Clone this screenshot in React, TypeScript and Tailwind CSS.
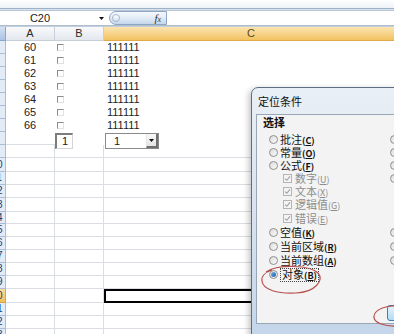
import React from "react";

type GridRow = { n: number; h: string; a?: string; hl?: boolean; sel?: boolean };

const topRows = [
  { n: 1, a: "60" },
  { n: 2, a: "61" },
  { n: 3, a: "62" },
  { n: 4, a: "63" },
  { n: 5, a: "64" },
  { n: 6, a: "65" },
  { n: 7, a: "66" },
];

const gridRows: GridRow[] = [
  { n: 9, h: "h-[13px]" },
  { n: 10, h: "h-[14px]" },
  { n: 11, h: "h-[13px]" },
  { n: 12, h: "h-[13px]" },
  { n: 13, h: "h-[14px]" },
  { n: 14, h: "h-[12px]" },
  { n: 15, h: "h-[13px]" },
  { n: 16, h: "h-[13px]" },
  { n: 17, h: "h-[13px]" },
  { n: 18, h: "h-[13px]" },
  { n: 19, h: "h-[13px]" },
  { n: 20, h: "h-[14px]", hl: true, sel: true },
  { n: 21, h: "h-[13px]" },
  { n: 22, h: "h-[13px]" },
  { n: 23, h: "h-[13px]" },
];

function RowHead({ n, hl }: { n: number; hl?: boolean }) {
  return (
    <div
      className={
        hl
          ? "w-[6px] shrink-0 overflow-hidden flex justify-end items-center border-b border-r border-[#d9a445] bg-linear-to-b from-[#fbdc9e] to-[#f2bf58]"
          : "w-[6px] shrink-0 overflow-hidden flex justify-end items-center border-b border-r border-[#a9bed6] bg-[#e3ebf6]"
      }
    >
      <span className="w-[16px] shrink-0 text-center text-[10px] leading-none text-[#22406a]">{n}</span>
    </div>
  );
}

function CheckSmall() {
  return (
    <div className="w-[7px] h-[7px] border-t border-l border-[#8c8c8c] border-r border-b border-r-[#e2e2e2] border-b-[#e2e2e2] bg-white" />
  );
}

type Item = {
  type: "radio" | "check";
  label: string;
  k: string;
  right?: boolean;
  selected?: boolean;
  h: string;
};

const items: Item[] = [
  { type: "radio", label: "批注", k: "C", right: true, h: "h-[13px]" },
  { type: "radio", label: "常量", k: "O", right: true, h: "h-[13px]" },
  { type: "radio", label: "公式", k: "F", right: true, h: "h-[13px]" },
  { type: "check", label: "数字", k: "U", right: true, h: "h-[13px]" },
  { type: "check", label: "文本", k: "X", h: "h-[13px]" },
  { type: "check", label: "逻辑值", k: "G", h: "h-[13px]" },
  { type: "check", label: "错误", k: "E", h: "h-[14px]" },
  { type: "radio", label: "空值", k: "K", right: true, h: "h-[14px]" },
  { type: "radio", label: "当前区域", k: "R", right: true, h: "h-[14px]" },
  { type: "radio", label: "当前数组", k: "A", right: true, h: "h-[14px]" },
  { type: "radio", label: "对象", k: "B", selected: true, h: "h-[15px]" },
];

function Radio({ on }: { on?: boolean }) {
  return (
    <div className="w-[9px] h-[9px] shrink-0 rounded-full border border-[#8e8f8f] bg-linear-to-br from-[#dcdcdc] to-[#fbfbfb] flex items-center justify-center">
      {on && <div className="w-[5px] h-[5px] rounded-full bg-linear-to-br from-[#6fb1ec] to-[#1a5ba8]" />}
    </div>
  );
}

function CheckDisabled() {
  return (
    <div className="w-[9px] h-[9px] shrink-0 border border-[#b5b5b5] bg-[#f4f4f4] flex items-center justify-center">
      <svg width="7" height="7" viewBox="0 0 7 7">
        <path d="M1 3.6 L2.8 5.3 L6 1.4" fill="none" stroke="#a0a0a0" strokeWidth="1.1" />
      </svg>
    </div>
  );
}

export default function App() {
  return (
    <div className="relative w-[394px] h-[334px] overflow-hidden bg-white font-['Liberation_Sans','Noto_Sans_CJK_SC',sans-serif] text-[11px] text-[#222]">
      {/* top band */}
      <div className="h-[8px] bg-linear-to-b from-white to-[#eef2f7]" />
      <div className="h-[3px] border-t border-[#9fb1c6] bg-[#d9e3ee] border-b border-b-[#b8c6d6]" />
      {/* formula bar */}
      <div className="flex h-[14px] items-stretch bg-white">
        <div className="w-[96px] flex items-center justify-center text-[11px] text-[#222] pr-[16px]">C20</div>
        <div className="w-[10px] flex items-center justify-center">
          <svg width="5" height="3" viewBox="0 0 5 3">
            <path d="M0 0 H5 L2.5 3 Z" fill="#111" />
          </svg>
        </div>
        <div className="w-[3px]" />
        <div className="w-[58px] rounded-l-full border border-[#8ea6c3] bg-linear-to-b from-[#f5f8fc] via-[#e3ecf7] to-[#c5d6eb] flex items-center justify-between pl-[2px] pr-[5px]">
          <div className="w-[8px] h-[8px] rounded-full border border-[#a5b7ce] bg-linear-to-b from-white to-[#d6e1ee]" />
          <span className="font-['Liberation_Serif',serif] italic text-[11px] leading-none text-[#333]">
            f<span className="text-[8px]">x</span>
          </span>
        </div>
        <div className="flex-1 bg-white" />
      </div>
      <div className="h-[2px] bg-[#c3cfdc] border-t border-[#aebccc]" />
      {/* column headers */}
      <div className="flex h-[14px]">
        <div className="w-[6px] border-r border-b border-[#8aa6cb] bg-linear-to-b from-[#d2e0f2] to-[#abc4e6]" />
        <div className="w-[49px] flex items-center justify-center border-r border-b border-[#c7d0da] bg-linear-to-b from-[#f8f9fb] to-[#e3e8ee] text-[#2c2c2c]">A</div>
        <div className="w-[49px] flex items-center justify-center border-r border-b border-[#c7d0da] bg-linear-to-b from-[#f8f9fb] to-[#e3e8ee] text-[#2c2c2c]">B</div>
        <div className="flex-1 flex items-center justify-center pl-[4px] border-b border-[#e0a94a] bg-linear-to-b from-[#fbe4b0] to-[#f2c25f] text-[#5b4a1e]">C</div>
      </div>
      {/* rows 1-7 */}
      {topRows.map((r) => (
        <div key={r.n} className="flex h-[13px]">
          <RowHead n={r.n} />
          <div className="w-[49px] flex items-center justify-center pr-[1px] text-[11px] leading-none text-[#222]">{r.a}</div>
          <div className="w-[49px] flex items-start pl-[2px] pt-[3px]">
            <CheckSmall />
          </div>
          <div className="flex-1 flex items-center pl-[3px] text-[11px] leading-none text-[#222]">111111</div>
        </div>
      ))}
      {/* row 8 with controls */}
      <div className="flex h-[13px] relative z-10">
        <RowHead n={8} />
        <div className="w-[49px] border-b border-[#dadde2]" />
        <div className="w-[49px] flex items-start">
          <div className="w-[18px] h-[16px] mt-[1px] border-t-2 border-l-2 border-[#7c7c7c] border-r border-b border-r-[#d4d4d4] border-b-[#d4d4d4] bg-white flex items-center justify-end pr-[4px] text-[11px] leading-none text-[#222]">
            1
          </div>
        </div>
        <div className="flex-1 flex items-start">
          <div className="w-[54px] h-[16px] mt-[1px] ml-[1px] border border-[#8a8a8a] bg-white flex items-stretch">
            <div className="flex-1 flex items-center pl-[8px] text-[11px] leading-none text-[#222]">1</div>
            <div className="w-[12px] border-l border-[#e6e6e6] bg-linear-to-b from-[#f8f8f8] to-[#e4e4e4] border-b-2 border-r-2 border-b-[#6f6f6f] border-r-[#6f6f6f] flex items-center justify-center">
              <svg width="5" height="3" viewBox="0 0 5 3">
                <path d="M0 0 H5 L2.5 3 Z" fill="#111" />
              </svg>
            </div>
          </div>
        </div>
      </div>
      {/* grid rows */}
      {gridRows.map((r) => (
        <div key={r.n} className={`flex ${r.h}`}>
          <RowHead n={r.n} hl={r.hl} />
          <div className="w-[49px] border-r border-b border-[#dadde2]" />
          <div className="w-[49px] border-r border-b border-[#dadde2]" />
          <div className={r.sel ? "flex-1 border-2 border-black" : "flex-1 border-b border-[#dadde2]"} />
        </div>
      ))}

      {/* dialog */}
      <div className="absolute left-[251px] top-[87px] w-[170px] h-[252px] rounded-t-[7px] border border-[#5d6e82] bg-linear-to-b from-[#e9eff6] via-[#d8e3ef] to-[#c4d5ea] shadow-[-2px_2px_6px_rgba(0,0,0,0.25)] flex flex-col">
        <div className="h-[26px] flex items-center pl-[6px] text-[11px] text-[#111] font-['Noto_Sans_CJK_SC',sans-serif]">
          定位条件
        </div>
        <div className="ml-[4px] h-[210px] border border-[#98a6b6] bg-[#f3f3f3] font-['Noto_Sans_CJK_SC',sans-serif] flex flex-col">
          <div className="h-[13px] mt-[1px] pl-[6px] flex items-center text-[11px] font-bold text-[#111] leading-none">选择</div>
          <div className="mt-[4px] flex flex-col">
            {items.map((it) => (
              <div key={it.k} className={`flex items-center ${it.h}`}>
                <div className="w-[133px] flex items-center">
                  {it.type === "radio" ? (
                    <div className="pl-[12px] flex items-center gap-[2px]">
                      <Radio on={it.selected} />
                      <span
                        className={
                          it.selected
                            ? "border border-dotted border-[#444] px-[1px] leading-[11px] text-[11px] text-[#111] whitespace-nowrap"
                            : "leading-none text-[11px] text-[#111] whitespace-nowrap"
                        }
                      >
                        {it.label}
                        <span className="text-[9px] font-bold">
                          (<span className="underline">{it.k}</span>)
                        </span>
                      </span>
                    </div>
                  ) : (
                    <div className="pl-[26px] flex items-center gap-[3px]">
                      <CheckDisabled />
                      <span className="leading-none text-[11px] text-[#8d8d8d] whitespace-nowrap">
                        {it.label}
                        <span className="text-[9px]">
                          (<span className="underline">{it.k}</span>)
                        </span>
                      </span>
                    </div>
                  )}
                </div>
                {it.right && <Radio />}
              </div>
            ))}
          </div>
          <div className="flex-1" />
          <div className="flex pl-[130px] pb-[2px]">
            <div className="w-[30px] h-[16px] shrink-0 rounded-[3px] border border-[#3c7fb1] bg-linear-to-b from-[#e5f4fc] to-[#b1dcf5]" />
          </div>
        </div>
      </div>

      {/* red annotation ellipses */}
      <svg className="absolute left-[258px] top-[264px]" width="66" height="32" viewBox="0 0 66 32">
        <path
          d="M8 8 C20 0, 52 1, 60 9 C66 16, 58 28, 38 29 C20 30, 5 26, 4 17 C3 12, 8 8, 14 6"
          fill="none"
          stroke="#b9504f"
          strokeWidth="1.2"
        />
      </svg>
      <svg className="absolute left-[371px] top-[304px]" width="30" height="26" viewBox="0 0 30 26">
        <path d="M28 2 C16 1, 4 5, 3 12 C2 19, 14 23, 29 22" fill="none" stroke="#b9504f" strokeWidth="1.2" />
      </svg>
    </div>
  );
}
